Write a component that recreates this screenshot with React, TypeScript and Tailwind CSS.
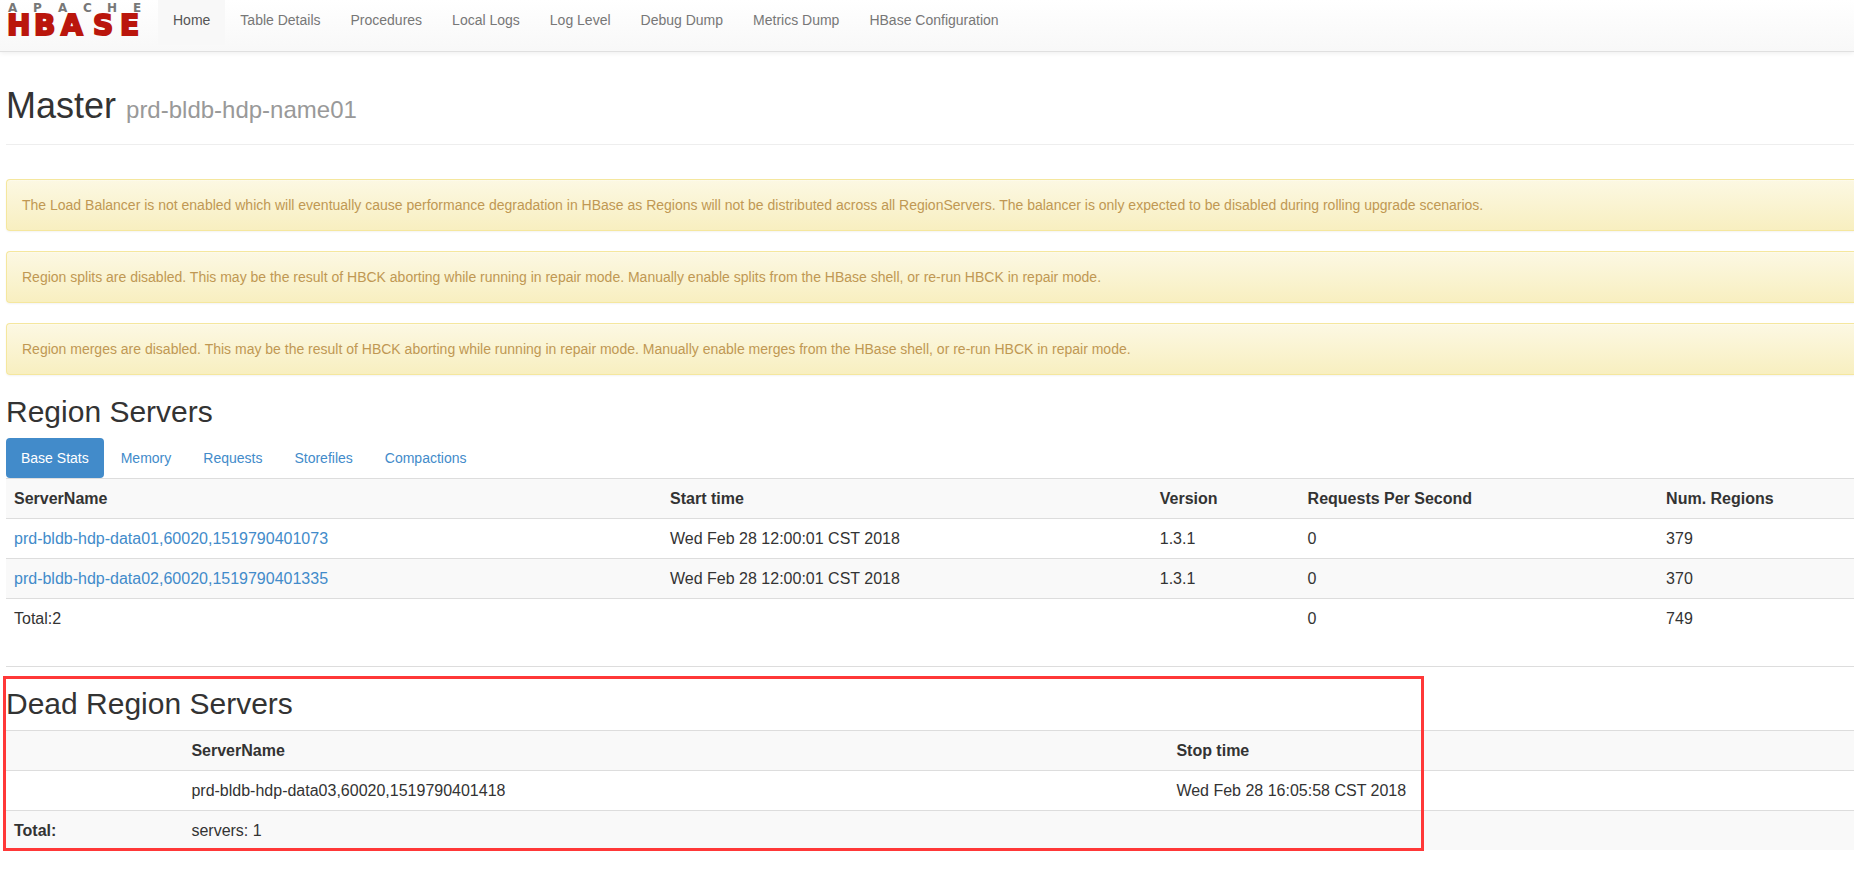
import { useState } from 'react'

type RegionServer = { name: string; start: string; version: string; requests: number; regions: number }

const navItems = ['Home', 'Table Details', 'Procedures', 'Local Logs', 'Log Level', 'Debug Dump', 'Metrics Dump', 'HBase Configuration']

const warnings = [
  'The Load Balancer is not enabled which will eventually cause performance degradation in HBase as Regions will not be distributed across all RegionServers. The balancer is only expected to be disabled during rolling upgrade scenarios.',
  'Region splits are disabled. This may be the result of HBCK aborting while running in repair mode. Manually enable splits from the HBase shell, or re-run HBCK in repair mode.',
  'Region merges are disabled. This may be the result of HBCK aborting while running in repair mode. Manually enable merges from the HBase shell, or re-run HBCK in repair mode.',
]

const tabs = ['Base Stats', 'Memory', 'Requests', 'Storefiles', 'Compactions']

const servers: RegionServer[] = [
  { name: 'prd-bldb-hdp-data01,60020,1519790401073', start: 'Wed Feb 28 12:00:01 CST 2018', version: '1.3.1', requests: 0, regions: 379 },
  { name: 'prd-bldb-hdp-data02,60020,1519790401335', start: 'Wed Feb 28 12:00:01 CST 2018', version: '1.3.1', requests: 0, regions: 370 },
]

const cell = 'p-2 text-left'
const row = 'border-t border-[#ddd] odd:bg-[#f9f9f9]'
const tableClass = 'w-full table-fixed border-collapse text-base leading-[23px]'

function Logo(){
  return (
    <svg className="overflow-visible" width="136" height="40" viewBox="0 0 136 40" role="img" aria-label="Apache HBase" fontFamily='"DejaVu Sans", sans-serif' fontWeight="bold">
      <text x="1 26 51 76 100 126" y="12" fontSize="12" fill="#777">APACHE</text>
      <text x="0 27 54 86 113" y="35" fontSize="28" fill="#ba160c" stroke="#ba160c" strokeWidth="2">HBASE</text>
    </svg>
  )
}

function Navbar(){
  return (
    <nav className="flex h-[52px] border-b border-[#e0e0e0] bg-linear-to-b from-white to-[#f8f8f8] pb-1.5 shadow-[0_1px_5px_rgba(0,0,0,0.075)]">
      <a href="#" className="pl-[7px] pr-[15px]">
        <Logo />
      </a>
      <ul className="flex text-sm">
        {navItems.map((item, i) => (
          <li key={item}>
            <a href="#" className={`block px-[15px] pt-2.5 pb-[15px] ${i === 0 ? 'bg-[#f8f8f8] text-[#555]' : 'text-[#777] hover:text-[#333]'}`}>{item}</a>
          </li>
        ))}
      </ul>
    </nav>
  )
}

export default function App(){
  const [tab, setTab] = useState(tabs[0])
  const totalRequests = servers.reduce((sum, s) => sum + s.requests, 0)
  const totalRegions = servers.reduce((sum, s) => sum + s.regions, 0)

  return (
    <div className="min-h-screen overflow-x-hidden bg-white font-['Liberation_Sans',Arial,sans-serif] text-[#333]">
      <Navbar />
      <main className="pl-1.5">
        <header className="border-b border-[#eee] pt-[34px] pb-[18px]">
          <h1 className="text-4xl leading-10">
            Master <small className="text-2xl leading-none text-[#999]">prd-bldb-hdp-name01</small>
          </h1>
        </header>

        <div className="mt-[34px] flex flex-col gap-5">
          {warnings.map(text => (
            <div key={text} className="rounded-l border border-r-0 border-[#f5e79e] bg-linear-to-b from-[#fcf8e3] to-[#f8efc0] p-[15px] text-sm text-[#c09853] shadow-[inset_0_1px_0_rgba(255,255,255,0.25),0_1px_2px_rgba(0,0,0,0.05)]">
              {text}
            </div>
          ))}
        </div>

        <section className="mt-5">
          <h2 className="text-3xl leading-[33px]">Region Servers</h2>
          <div role="tablist" className="mt-2.5 flex gap-0.5 text-sm">
            {tabs.map(t => (
              <button
                key={t}
                role="tab"
                aria-selected={t === tab}
                onClick={()=>setTab(t)}
                className={`cursor-pointer rounded px-[15px] py-2.5 ${t === tab ? 'bg-[#428bca] text-white' : 'text-[#428bca] hover:bg-[#eee]'}`}
              >
                {t}
              </button>
            ))}
          </div>
          <table className={tableClass}>
            <colgroup>
              <col className="w-[35.5%]" />
              <col className="w-[26.5%]" />
              <col className="w-[8%]" />
              <col className="w-[19.4%]" />
              <col />
            </colgroup>
            <tbody>
              <tr className={row}>
                <th className={cell}>ServerName</th>
                <th className={cell}>Start time</th>
                <th className={cell}>Version</th>
                <th className={cell}>Requests Per Second</th>
                <th className={cell}>Num. Regions</th>
              </tr>
              {servers.map(s => (
                <tr key={s.name} className={row}>
                  <td className={cell}><a href="#" className="text-[#428bca] hover:underline">{s.name}</a></td>
                  <td className={cell}>{s.start}</td>
                  <td className={cell}>{s.version}</td>
                  <td className={cell}>{s.requests}</td>
                  <td className={cell}>{s.regions}</td>
                </tr>
              ))}
              <tr className="border-t border-[#ddd]">
                <td className={cell}>Total:{servers.length}</td>
                <td className={cell}></td>
                <td className={cell}></td>
                <td className={cell}>{totalRequests}</td>
                <td className={cell}>{totalRegions}</td>
              </tr>
            </tbody>
          </table>
        </section>

        <section className="relative mt-7 border-t border-[#ddd] pt-5">
          <h2 className="text-3xl leading-[33px]">Dead Region Servers</h2>
          <table className={`${tableClass} mt-2.5`}>
            <colgroup>
              <col className="w-[9.6%]" />
              <col className="w-[53.3%]" />
              <col />
            </colgroup>
            <tbody>
              <tr className={row}>
                <th className={cell}></th>
                <th className={cell}>ServerName</th>
                <th className={cell}>Stop time</th>
              </tr>
              <tr className={row}>
                <td className={cell}></td>
                <td className={cell}>prd-bldb-hdp-data03,60020,1519790401418</td>
                <td className={cell}>Wed Feb 28 16:05:58 CST 2018</td>
              </tr>
              <tr className={row}>
                <th className={cell}>Total:</th>
                <td className={cell}>servers: 1</td>
                <td className={cell}></td>
              </tr>
            </tbody>
          </table>
          {/* highlight around the dead servers */}
          <div className="pointer-events-none absolute -left-[3px] top-[9px] -bottom-px w-[76.9%] border-3 border-[#ff3838]" />
        </section>
      </main>
    </div>
  )
}
